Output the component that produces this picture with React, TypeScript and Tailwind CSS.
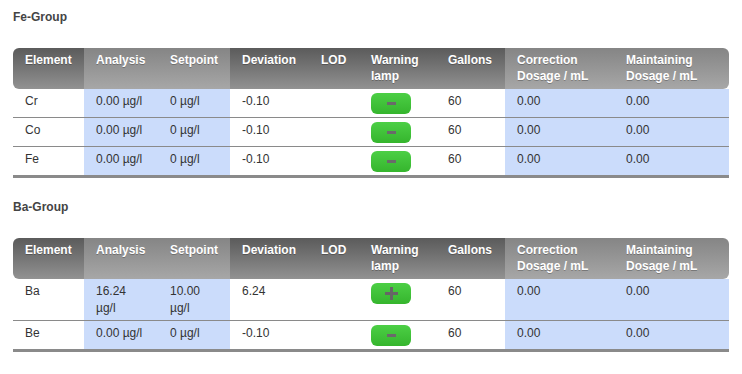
type Row = {
  element: string;
  analysis: string;
  setpoint: string;
  deviation: string;
  lod: string;
  lamp: "plus" | "minus";
  gallons: string;
  correction: string;
  maintaining: string;
};

const groups: { name: string; rows: Row[] }[] = [
  {
    name: "Fe-Group",
    rows: [
      { element: "Cr", analysis: "0.00 µg/l", setpoint: "0 µg/l", deviation: "-0.10", lod: "", lamp: "minus", gallons: "60", correction: "0.00", maintaining: "0.00" },
      { element: "Co", analysis: "0.00 µg/l", setpoint: "0 µg/l", deviation: "-0.10", lod: "", lamp: "minus", gallons: "60", correction: "0.00", maintaining: "0.00" },
      { element: "Fe", analysis: "0.00 µg/l", setpoint: "0 µg/l", deviation: "-0.10", lod: "", lamp: "minus", gallons: "60", correction: "0.00", maintaining: "0.00" },
    ],
  },
  {
    name: "Ba-Group",
    rows: [
      { element: "Ba", analysis: "16.24 µg/l", setpoint: "10.00 µg/l", deviation: "6.24", lod: "", lamp: "plus", gallons: "60", correction: "0.00", maintaining: "0.00" },
      { element: "Be", analysis: "0.00 µg/l", setpoint: "0 µg/l", deviation: "-0.10", lod: "", lamp: "minus", gallons: "60", correction: "0.00", maintaining: "0.00" },
    ],
  },
];

const dark = "bg-linear-to-b from-[#5b5b5b] to-[#929292]";
const light = "bg-linear-to-b from-[#858585] to-[#a7a7a7]";

// header columns: label, width, highlighted
const columns: [string, string, boolean][] = [
  ["Element", "w-[71px]", false],
  ["Analysis", "w-[74px]", true],
  ["Setpoint", "w-[72px]", true],
  ["Deviation", "w-[79px]", false],
  ["LOD", "w-[50px]", false],
  ["Warning lamp", "w-[77px]", false],
  ["Gallons", "w-[69px]", false],
  ["Correction Dosage / mL", "w-[109px]", true],
  ["Maintaining Dosage / mL", "w-[115px]", true],
];

const Lamp = ({ kind }: { kind: "plus" | "minus" }) => (
  <div className="flex h-[21px] w-[40px] items-center justify-center rounded-[6px] bg-linear-to-b from-[#4ccf45] to-[#35b52d]">
    {kind === "minus" ? (
      <div className="h-[3px] w-[9px] bg-[#6a6a6a]" />
    ) : (
      <svg width="13" height="13" viewBox="0 0 13 13">
        <rect x="5" y="0" width="3" height="13" fill="#666" />
        <rect x="0" y="5" width="13" height="3" fill="#666" />
      </svg>
    )}
  </div>
);

const GroupTable = ({ rows }: { rows: Row[] }) => {
  return (
    <table className="w-[716px] table-fixed border-separate border-spacing-0 text-left">
      <thead>
        <tr>
          {columns.map(([label, width, hl], i) => (
            <th
              key={label}
              className={`${width} ${hl ? light : dark} px-[12px] pt-[4px] pb-[5px] align-top text-[12px] leading-[16px] font-bold text-white [text-shadow:0_1px_0_rgba(0,0,0,0.25)] ${
                i === 0 ? "rounded-l-[6px]" : ""
              } ${i === columns.length - 1 ? "rounded-r-[6px]" : ""}`}
            >
              {label}
            </th>
          ))}
        </tr>
      </thead>
      <tbody>
        {rows.map((r, idx) => {
          const last = idx === rows.length - 1;
          const cell = `px-[12px] pt-[4px] pb-[3px] align-top text-[12px] leading-[17px] text-[#333] border-[#8a8a8a] ${
            last ? "border-b-[3px]" : "border-b"
          }`;
          const blue = `${cell} bg-[#cbdcfb]`;
          return (
            <tr key={r.element}>
              <td className={cell}>{r.element}</td>
              <td className={blue}>{r.analysis}</td>
              <td className={blue}>{r.setpoint}</td>
              <td className={cell}>{r.deviation}</td>
              <td className={cell}>{r.lod}</td>
              <td className={cell}>
                <Lamp kind={r.lamp} />
              </td>
              <td className={cell}>{r.gallons}</td>
              <td className={blue}>{r.correction}</td>
              <td className={blue}>{r.maintaining}</td>
            </tr>
          );
        })}
      </tbody>
    </table>
  );
};

export default function App() {
  return (
    <div className="min-h-[374px] w-[742px] bg-white px-[13px] pt-[10px] font-['Liberation_Sans',Arial,sans-serif]">
      {groups.map((g) => (
        <div key={g.name} className="mb-[22px]">
          <h2 className="mb-[23px] text-[12px] leading-[15px] font-bold text-[#444]">{g.name}</h2>
          <GroupTable rows={g.rows} />
        </div>
      ))}
    </div>
  );
}
